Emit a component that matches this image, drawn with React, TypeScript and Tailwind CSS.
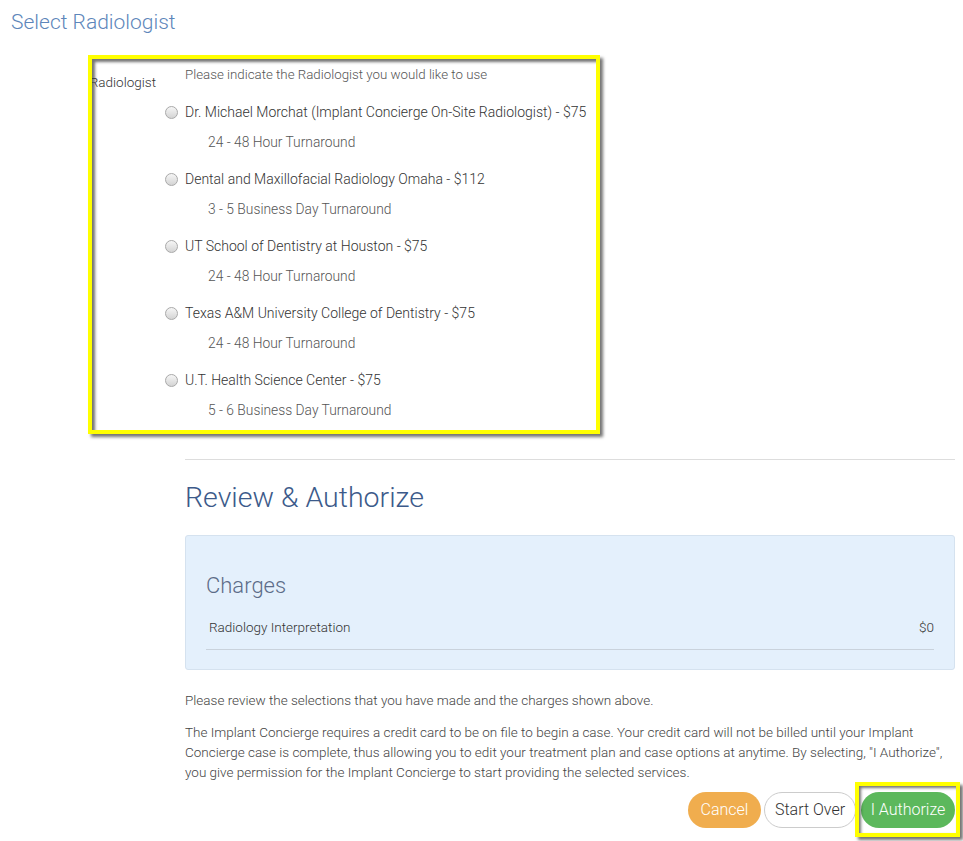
import React from "react";

interface RadiologistOption {
  id: number;
  label: string;
  turnaround: string;
}

const options: RadiologistOption[] = [
  { id: 1, label: "Dr. Michael Morchat (Implant Concierge On-Site Radiologist) - $75", turnaround: "24 - 48 Hour Turnaround" },
  { id: 2, label: "Dental and Maxillofacial Radiology Omaha - $112", turnaround: "3 - 5 Business Day Turnaround" },
  { id: 3, label: "UT School of Dentistry at Houston - $75", turnaround: "24 - 48 Hour Turnaround" },
  { id: 4, label: "Texas A&M University College of Dentistry - $75", turnaround: "24 - 48 Hour Turnaround" },
  { id: 5, label: "U.T. Health Science Center - $75", turnaround: "5 - 6 Business Day Turnaround" },
];

// fake radio, greyed like the old windows one
const Radio = () => (
  <span className="block w-[13px] h-[13px] rounded-full border border-[#a9a9a9] bg-gradient-to-b from-[#f6f6f6] to-[#d4d4d4]" />
);

const App: React.FC = () => {
  return (
    <div className="min-h-[841px] bg-white text-[#333] font-['Roboto','Liberation_Sans',sans-serif] font-light">
      {/* Page title */}
      <h1 className="pl-[11px] pt-[8px] h-[55px] text-[21px] leading-[28px] text-[#5d86ba] font-light">Select Radiologist</h1>

      {/* Radiologist form group (highlighted) */}
      <div className="ml-[88px] w-[512px] border-4 border-[#ffff00] overflow-hidden shadow-[inset_3px_3px_3px_rgba(0,0,0,0.55),3px_3px_3px_rgba(0,0,0,0.55)] pt-[6px] pb-[10px]">
        <div className="flex">
          <div className="w-[73px] shrink-0 flex justify-end pr-[9px] pt-[7px]">
            <span className="shrink-0 whitespace-nowrap text-[13.5px] leading-[20px] text-[#333]">Radiologist</span>
          </div>
          <div className="flex-1">
            <p className="pl-[20px] text-[13.3px] leading-[20px] text-[#555]">Please indicate the Radiologist you would like to use</p>
            {options.map((opt) => (
              <div key={opt.id}>
                <div className="mt-[17px] flex items-center h-[20px] gap-[7px]">
                  <Radio />
                  <span className="text-[14px] leading-[20px] text-[#333] whitespace-nowrap">{opt.label}</span>
                </div>
                <div className="mt-[10px] pl-[43px] text-[13.8px] leading-[20px] text-[#555]">{opt.turnaround}</div>
              </div>
            ))}
          </div>
        </div>
      </div>

      {/* Review & Authorize */}
      <div className="ml-[185px] w-[770px] pt-[25px]">
        <hr className="border-0 border-t border-[#dddddd]" />
        <h2 className="mt-[20px] text-[28.5px] leading-[36px] text-[#3c5a8a] font-light">Review &amp; Authorize</h2>

        <div className="mt-[19px] h-[135px] rounded-[3px] border border-[#d5e2ef] bg-[#e4f0fc] px-[20px] pt-[36px]">
          <h3 className="text-[22px] leading-[28px] text-[#5c6c88] font-light">Charges</h3>
          <div className="mt-[17px] flex justify-between pl-[3px] pr-[0px] text-[13.5px] leading-[20px] text-[#333]">
            <span>Radiology Interpretation</span>
            <span>$0</span>
          </div>
          <div className="mt-[12px] border-t border-[#c9d2dc]" />
        </div>

        <p className="mt-[20px] text-[13.5px] leading-[20px] text-[#444]">Please review the selections that you have made and the charges shown above.</p>
        <p className="mt-[12px] text-[13.5px] leading-[20px] text-[#444]">
          The Implant Concierge requires a credit card to be on file to begin a case. Your credit card will not be billed until your Implant Concierge case is complete, thus allowing you to edit your treatment plan and case options at anytime. By selecting, "I Authorize", you give permission for the Implant Concierge to start providing the selected services.
        </p>

        <div className="mt-[10px] flex justify-end items-center">
          <button className="h-[36px] w-[73px] rounded-full bg-[#f0ad4e] text-white text-[16px] font-light">Cancel</button>
          <button className="ml-[3px] h-[36px] w-[92px] rounded-full border border-[#cccccc] bg-white text-[#333] text-[16px] font-light">Start Over</button>
          <div className="relative ml-[5px]">
            <button className="h-[36px] w-[94px] rounded-full bg-[#5cb85c] text-white text-[16px] font-light">I Authorize</button>
            <span className="pointer-events-none absolute -left-[6px] -top-[10px] -right-[5px] -bottom-[9px] border-4 border-[#ffff00] shadow-[inset_2px_2px_3px_rgba(0,0,0,0.55),3px_3px_3px_rgba(0,0,0,0.55)]" />
          </div>
        </div>
      </div>
    </div>
  );
};

export default App;
